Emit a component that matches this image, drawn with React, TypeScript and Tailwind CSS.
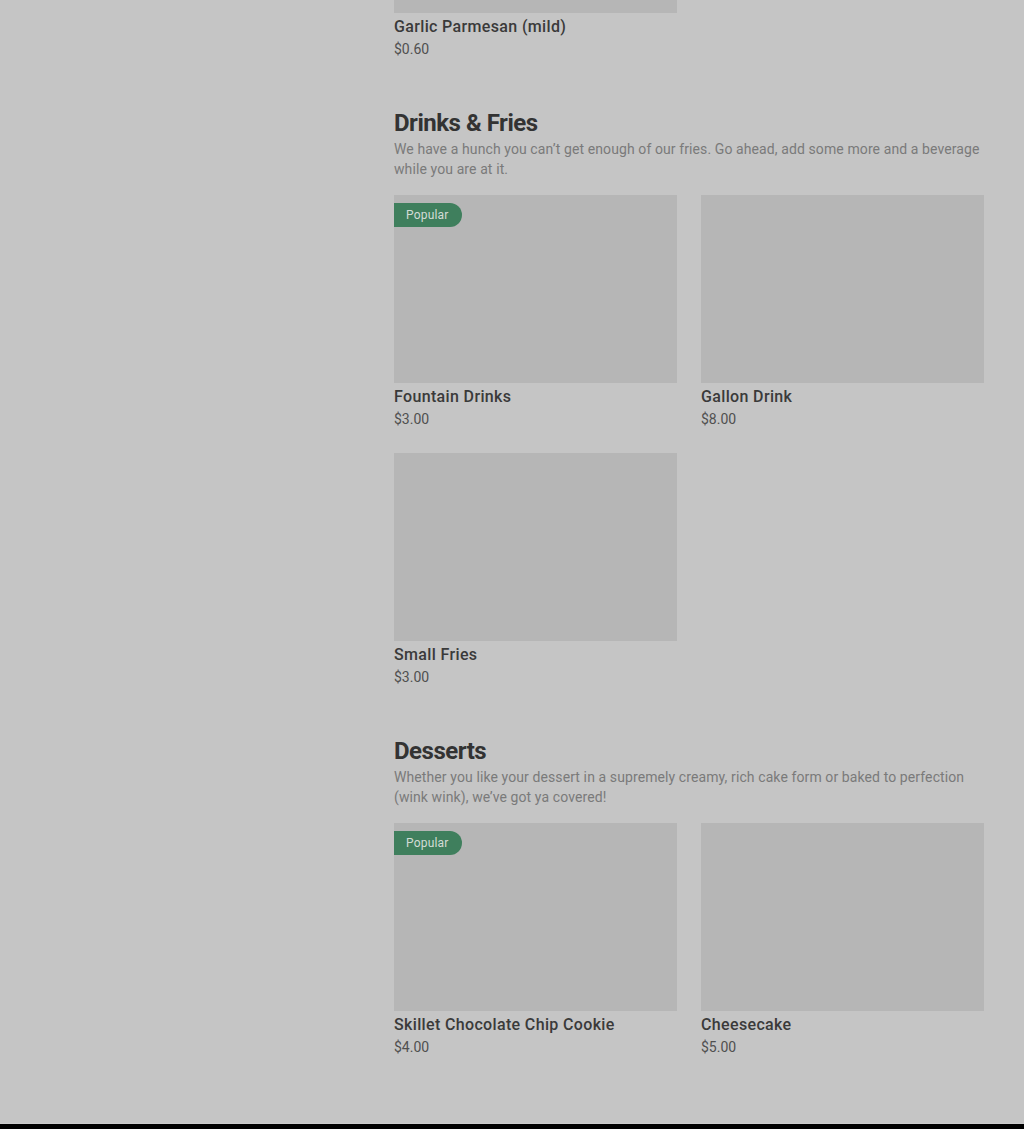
import React from "react";

type Item = { name: string; price: string; popular?: boolean };

type Section = { title: string; blurb: string; items: Item[] };

const sections: Section[] = [
  {
    title: "Drinks & Fries",
    blurb:
      "We have a hunch you can’t get enough of our fries. Go ahead, add some more and a beverage while you are at it.",
    items: [
      { name: "Fountain Drinks", price: "$3.00", popular: true },
      { name: "Gallon Drink", price: "$8.00" },
      { name: "Small Fries", price: "$3.00" },
    ],
  },
  {
    title: "Desserts",
    blurb:
      "Whether you like your dessert in a supremely creamy, rich cake form or baked to perfection (wink wink), we’ve got ya covered!",
    items: [
      { name: "Skillet Chocolate Chip Cookie", price: "$4.00", popular: true },
      { name: "Cheesecake", price: "$5.00" },
    ],
  },
];

function ItemCard({ item, imageClass = "h-[188px]" }: { item: Item; imageClass?: string }) {
  return (
    <div className="flex flex-col">
      <div className={`relative w-full bg-[#b6b6b6] ${imageClass}`}>
        {item.popular && (
          <span className="absolute left-0 top-2 flex h-6 items-center rounded-r-full bg-[#3f7f5d] pl-3 pr-[13px] text-[12px] tracking-[0.2px] text-[#d3dcd6]">
            Popular
          </span>
        )}
      </div>
      <p className="mt-[2px] text-[16px] leading-6 font-medium tracking-[0.35px] text-[#3a3a3a]">
        {item.name}
      </p>
      <p className="text-[14px] leading-5 text-[#505050]">{item.price}</p>
    </div>
  );
}

export default function App() {
  return (
    <div
      className="flex min-h-[1129px] flex-col bg-[#c5c5c5]"
      style={{ fontFamily: "Roboto, 'Noto Sans', sans-serif" }}
    >
      <main className="flex-1 pl-[394px]">
        <div className="w-[590px]">
          {/* tail of the previous section, scrolled mostly off screen */}
          <div className="grid grid-cols-2 gap-x-6">
            <ItemCard item={{ name: "Garlic Parmesan (mild)", price: "$0.60" }} imageClass="h-[13px]" />
          </div>

          {sections.map((s) => (
            <section key={s.title} className="mt-[48px]">
              <h2 className="text-[24px] leading-8 font-bold tracking-[-0.02em] text-[#333]">
                {s.title}
              </h2>
              <p className="text-[14px] leading-5 tracking-[0.1px] text-[#7a7a7a]">{s.blurb}</p>
              <div className="mt-4 grid grid-cols-2 gap-x-6 gap-y-[24px]">
                {s.items.map((it) => (
                  <ItemCard key={it.name} item={it} />
                ))}
              </div>
            </section>
          ))}
        </div>
      </main>
      <div className="h-px bg-[#cbcbcb]" />
      <footer className="h-[5px] bg-black" />
    </div>
  );
}
